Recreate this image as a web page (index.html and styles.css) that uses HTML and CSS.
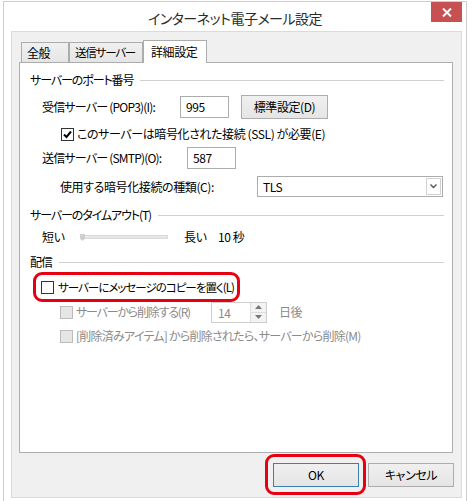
FILE: index.html
```html
<!DOCTYPE html>
<html lang="ja">
<head>
    <meta charset="UTF-8">
    <title>インターネット電子メール設定</title>
    <link rel="stylesheet" href="styles.css">
</head>
<body>
<div class="window">
    <div class="titlebar">
        <div class="title">インターネット電子メール設定</div>
        <div class="close">
            <svg width="10" height="9" viewBox="0 0 10 9"><path d="M1 0.5 L9 8.5 M9 0.5 L1 8.5" stroke="#fff" stroke-width="2"/></svg>
        </div>
    </div>
    <div class="client">
        <div class="tabs">
            <div class="tab tab-general">全般</div>
            <div class="tab tab-send">送信サーバー</div>
            <div class="tab active">詳細設定</div>
        </div>
        <div class="pane">
            <div class="group g1"><span>サーバーのポート番号</span><i class="rule"></i></div>

            <div class="row row-pop">
                <span class="lbl lbl-pop">受信サーバー (POP3)(I):</span>
                <div class="field field-pop">995</div>
                <div class="btn btn-default">標準設定(D)</div>
            </div>
            <div class="row row-ssl">
                <span class="check checked"><svg width="11" height="11" viewBox="0 0 11 11"><path d="M2 5.5 L4.5 8 L9 2.5" fill="none" stroke="#000" stroke-width="2"/></svg></span>
                <span>このサーバーは暗号化された接続 (SSL) が必要(E)</span>
            </div>
            <div class="row row-smtp">
                <span class="lbl lbl-smtp">送信サーバー (SMTP)(O):</span>
                <div class="field field-smtp">587</div>
            </div>
            <div class="row row-enc">
                <span class="lbl lbl-enc">使用する暗号化接続の種類(C):</span>
                <div class="select">
                    <span class="select-val">TLS</span>
                    <span class="select-arrow"><svg width="7" height="5" viewBox="0 0 7 5"><path d="M0.5 0.5 L3.5 3.5 L6.5 0.5" fill="none" stroke="#555" stroke-width="1.4"/></svg></span>
                </div>
            </div>

            <div class="group g2"><span>サーバーのタイムアウト(T)</span><i class="rule"></i></div>
            <div class="row row-slider">
                <span class="lbl-short">短い</span>
                <div class="track"><span class="thumb"></span></div>
                <span class="lbl-long">長い</span>
                <span class="secs">10 秒</span>
            </div>

            <div class="group g3"><span>配信</span><i class="rule"></i></div>
            <div class="highlight hl-copy">
                <div class="row row-copy">
                    <span class="check"></span>
                    <span class="copy-text">サーバーにメッセージのコピーを置く(L)</span>
                </div>
            </div>
            <div class="row row-del disabled">
                <span class="check off"></span>
                <span class="lbl-del">サーバーから削除する(R)</span>
                <div class="spin">
                    <span class="spin-val">14</span>
                    <span class="spin-btns">
                        <span class="spin-up"><svg width="7" height="4" viewBox="0 0 7 4"><path d="M0 4 L3.5 0 L7 4 Z" fill="#777"/></svg></span>
                        <span class="spin-down"><svg width="7" height="4" viewBox="0 0 7 4"><path d="M0 0 L3.5 4 L7 0 Z" fill="#777"/></svg></span>
                    </span>
                </div>
                <span class="days">日後</span>
            </div>
            <div class="row row-purge disabled">
                <span class="check off"></span>
                <span class="purge-text">[削除済みアイテム] から削除されたら、サーバーから削除(M)</span>
            </div>
        </div>
        <div class="footer">
            <div class="highlight hl-ok">
                <div class="btn btn-ok">OK</div>
            </div>
            <div class="btn btn-cancel">キャンセル</div>
        </div>
    </div>
</div>
</body>
</html>
```

FILE: styles.css
```css
*{
    margin: 0;
    padding: 0;
    box-sizing: border-box;
}
body{
    background: #fff;
    font-family: "Noto Sans CJK JP", "Noto Sans", sans-serif;
    font-feature-settings: "palt";
    font-size: 12px;
    letter-spacing: -0.4px;
    color: #000;
    white-space: nowrap;
}
.window{
    margin: 1px 0 0 3px;
    width: 464px;
    height: 500px;
    border: 1px solid #cdcdcd;
    border-bottom: none;
}
.titlebar{
    display: flex;
    align-items: flex-start;
    height: 29px;
    padding-right: 4px;
}
.title{
    flex: 1;
    text-align: center;
    padding: 6px 0 0 35px;
    line-height: 20px;
    font-size: 14px;
    letter-spacing: -0.5px;
    color: #2b2b2b;
}
.close{
    width: 31px;
    height: 20px;
    background: #c75050;
    display: flex;
    align-items: center;
    justify-content: center;
}
.client{
    margin: 0 4px 0 7px;
    height: 467px;
    background: #f0f0f0;
    border: 1px solid #dadada;
    padding: 8px 0 0 7px;
}
.tabs{
    display: flex;
    align-items: flex-end;
    height: 23px;
    margin-bottom: -1px;
    padding-left: 2px;
    position: relative;
    z-index: 1;
}
.tab{
    height: 21px;
    line-height: 19px;
    border: 1px solid #acacac;
    background: linear-gradient(#f0f0f0, #e5e5e5);
    padding-left: 5px;
}
.tab-general{
    width: 48px;
}
.tab-send{
    width: 74px;
    font-size: 11.5px;
    letter-spacing: -1.2px;
}
.tab.active{
    width: 64px;
    height: 23px;
    line-height: 22px;
    background: #fff;
    border-bottom: none;
    padding-left: 7px;
}
.pane{
    width: 434px;
    height: 391px;
    background: #fff;
    border: 1px solid #adadad;
    padding: 0 8px 0 10px;
}
.group{
    display: flex;
    align-items: center;
    height: 20px;
    line-height: 20px;
    letter-spacing: -1.1px;
}
.rule{
    flex: 1;
    height: 1px;
    background: #d0d0d0;
    margin-left: 7px;
}
.g1{ margin-top: 7px; }
.g2{ margin-top: 8px; }
.g3{ margin-top: 7px; }

.row{
    display: flex;
    align-items: center;
    line-height: 18px;
}
.row-pop{
    margin-top: 6px;
    height: 22px;
    padding-left: 12px;
}
.lbl-pop, .lbl-smtp{
    letter-spacing: -0.8px;
}
.lbl-pop{ width: 138px; }
.lbl-smtp{ width: 145px; }
.lbl-enc{ width: 197px; }
.field{
    height: 22px;
    border: 1px solid #acacac;
    padding-left: 5px;
    line-height: 20px;
}
.field-pop{ width: 49px; }
.field-smtp{ width: 49px; }
.btn{
    height: 24px;
    border: 1px solid #adadad;
    background: linear-gradient(#f0f0f0, #e5e5e5);
    text-align: center;
    line-height: 22px;
}
.btn-default{
    width: 87px;
    margin-left: 12px;
}
.row-ssl{
    margin-top: 7px;
    height: 18px;
    padding-left: 31px;
}
.check{
    width: 13px;
    height: 13px;
    border: 1px solid #333;
    background: #fff;
    margin-right: 3px;
    display: flex;
    align-items: center;
    justify-content: center;
}
.check.off{
    border-color: #bcbcbc;
    background: #e6e6e6;
}
.row-smtp{
    margin-top: 4px;
    height: 22px;
    padding-left: 12px;
}
.row-enc{
    margin-top: 7px;
    height: 21px;
    padding-left: 30px;
}
.select{
    width: 186px;
    height: 21px;
    border: 1px solid #acacac;
    display: flex;
    align-items: center;
    justify-content: space-between;
    padding: 0 1px 0 5px;
}
.select-arrow{
    width: 15px;
    height: 17px;
    border: 1px solid #d2d2d2;
    display: flex;
    align-items: center;
    justify-content: center;
}
.row-slider{
    margin-top: 4px;
    height: 16px;
    padding-left: 12px;
}
.lbl-short{ width: 38px; }
.track{
    width: 88px;
    height: 4px;
    background: #e7e7e7;
    border: 1px solid #dadada;
    position: relative;
}
.thumb{
    position: absolute;
    left: -1px;
    top: -2px;
    width: 5px;
    height: 7px;
    background: #cfcfcf;
    clip-path: polygon(0 0, 100% 0, 100% 65%, 50% 100%, 0 65%);
}
.lbl-long{
    margin-left: 16px;
    width: 34px;
}
.highlight{
    border: 3px solid #e60012;
    border-radius: 9px;
}
.hl-copy{
    width: 207px;
    height: 30px;
    margin-left: 3px;
    padding-left: 5px;
    display: flex;
    align-items: center;
}
.hl-copy .check{
    margin-right: 4px;
}
.row-copy{
    height: 18px;
}
.copy-text{
    font-size: 11.5px;
    letter-spacing: -1px;
}
.disabled{
    color: #8a8a8a;
}
.row-del{
    height: 20px;
    padding-left: 30px;
}
.lbl-del{
    width: 135px;
    letter-spacing: -1.2px;
}
.spin{
    width: 56px;
    height: 21px;
    border: 1px solid #cfcfcf;
    display: flex;
    justify-content: space-between;
    padding-left: 6px;
    line-height: 19px;
}
.spin-btns{
    width: 16px;
    display: flex;
    flex-direction: column;
    border-left: 1px solid #dcdcdc;
}
.spin-btns span{
    flex: 1;
    display: flex;
    align-items: center;
    justify-content: center;
    background: #f3f3f3;
}
.spin-up{
    border-bottom: 1px solid #dcdcdc;
}
.days{
    margin-left: 12px;
}
.row-purge{
    margin-top: 5px;
    height: 18px;
    padding-left: 30px;
}
.purge-text{
    letter-spacing: -0.75px;
}
.footer{
    display: flex;
    justify-content: flex-end;
    align-items: center;
    margin-top: 1px;
    padding-right: 7px;
}
.hl-ok{
    padding: 6px 4px 5px 5px;
}
.btn-ok{
    width: 86px;
    border-color: #3c7fb1;
}
.btn-cancel{
    width: 86px;
    margin-left: 2px;
}
```
